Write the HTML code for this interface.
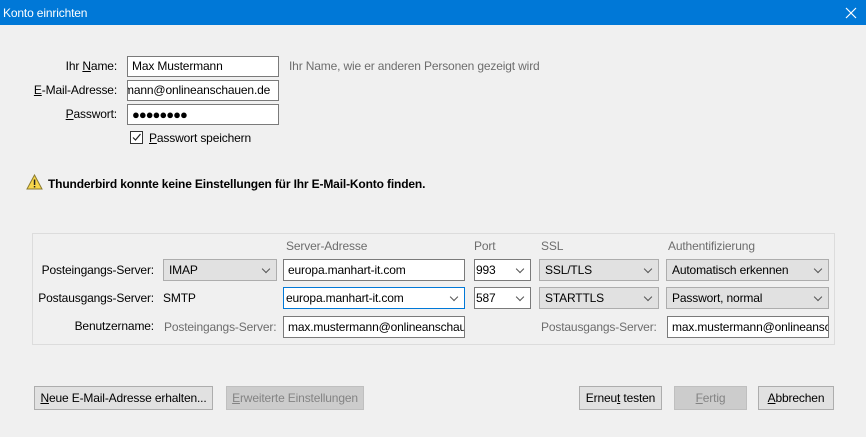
<!DOCTYPE html>
<html><head><meta charset="utf-8"><style>
*{box-sizing:border-box;margin:0;padding:0}
body{width:866px;height:437px;background:#f0f0f0;font-family:"Liberation Sans",sans-serif;font-size:12px;color:#000;position:relative;overflow:hidden;letter-spacing:-0.15px}
.a{position:absolute;white-space:nowrap;line-height:16px}
.title{position:absolute;left:0;top:0;width:866px;height:25px;background:#0078d7;color:#fff}
.in{position:absolute;background:#fff;border:1px solid #7a7a7a;height:21px;padding:2px 4px;line-height:15px;overflow:hidden;white-space:nowrap}
.sel{position:absolute;background:#e1e1e1;border:1px solid #adadad;height:22px;padding:3px 5px;line-height:15px;white-space:nowrap;overflow:hidden}
.sel.w{background:#fff;border-color:#7a7a7a}
.sel.f{background:#fff;border-color:#0078d7}
.sel:after{content:"";position:absolute;right:7px;top:6px;width:5px;height:5px;border-right:1px solid #555;border-bottom:1px solid #555;transform:rotate(45deg)}
.r{text-align:right}
.g{color:#6d6d6d}
.btn{position:absolute;height:24px;border:1px solid #adadad;background:#e1e1e1;text-align:center;line-height:22px;white-space:nowrap}
.btn.d{background:#cccccc;border-color:#bfbfbf;color:#838383}
u{text-decoration:underline}
</style></head><body>
<div class="title"><span class="a" style="left:3px;top:5px">Konto einrichten</span>
<svg style="position:absolute;left:845px;top:7px" width="12" height="12"><path d="M1 1L11 11M11 1L1 11" stroke="#fff" stroke-width="1.2"/></svg></div>

<div class="a r" style="left:20px;width:97px;top:58px">Ihr <u>N</u>ame:</div>
<div class="a r" style="left:20px;width:97px;top:82px"><u>E</u>-Mail-Adresse:</div>
<div class="a r" style="left:20px;width:97px;top:106px"><u>P</u>asswort:</div>
<div class="in" style="left:127px;top:56px;width:152px">Max Mustermann</div>
<div class="in" style="left:127px;top:80px;width:152px;text-indent:-8px">mann@onlineanschauen.de</div>
<div class="in" style="left:127px;top:104px;width:152px;font-size:13px;letter-spacing:-1px">●●●●●●●●</div>
<div class="a g" style="left:289px;top:58px">Ihr Name, wie er anderen Personen gezeigt wird</div>
<div style="position:absolute;left:130px;top:131px;width:13px;height:13px;border:1px solid #333;background:#fff"></div>
<svg style="position:absolute;left:130px;top:131px" width="13" height="13"><path d="M3 6.5L5.5 9L10.5 3" stroke="#222" fill="none" stroke-width="1.2"/></svg>
<div class="a" style="left:149px;top:130px"><u>P</u>asswort speichern</div>

<svg style="position:absolute;left:26px;top:174px" width="17" height="16"><path d="M8.5 1L16 15H1Z" fill="#f7d64a" stroke="#8a7a30"/><rect x="7.8" y="5.5" width="1.5" height="5.5" fill="#222"/><rect x="7.8" y="12" width="1.5" height="1.5" fill="#222"/></svg>
<div class="a" style="left:48px;top:176px;font-weight:bold">Thunderbird konnte keine Einstellungen für Ihr E-Mail-Konto finden.</div>

<div style="position:absolute;left:32px;top:233px;width:803px;height:112px;border:1px solid #dcdcdc"></div>
<div class="a g" style="left:286px;top:238px">Server-Adresse</div>
<div class="a g" style="left:474px;top:238px">Port</div>
<div class="a g" style="left:541px;top:238px">SSL</div>
<div class="a g" style="left:668px;top:238px">Authentifizierung</div>

<div class="a r" style="left:30px;width:124px;top:262px">Posteingangs-Server:</div>
<div class="sel" style="left:163px;top:259px;width:114px">IMAP</div>
<div class="in" style="left:283px;top:259px;width:182px;height:22px;padding-top:3px">europa.manhart-it.com</div>
<div class="sel w" style="left:474px;top:259px;width:57px;padding-left:1px">993</div>
<div class="sel" style="left:539px;top:259px;width:120px">SSL/TLS</div>
<div class="sel" style="left:666px;top:259px;width:163px">Automatisch erkennen</div>

<div class="a r" style="left:30px;width:124px;top:290px">Postausgangs-Server:</div>
<div class="a" style="left:163px;top:290px">SMTP</div>
<div class="sel f" style="left:283px;top:287px;width:182px;padding-left:2px">europa.manhart-it.com</div>
<div class="sel w" style="left:474px;top:287px;width:57px;padding-left:1px">587</div>
<div class="sel" style="left:539px;top:287px;width:120px">STARTTLS</div>
<div class="sel" style="left:666px;top:287px;width:163px">Passwort, normal</div>

<div class="a r" style="left:30px;width:124px;top:318px">Benutzername:</div>
<div class="a g" style="left:164px;top:319px">Posteingangs-Server:</div>
<div class="in" style="left:283px;top:316px;width:182px;height:22px;padding-top:3px">max.mustermann@onlineanschauen.de</div>
<div class="a g" style="left:541px;top:319px">Postausgangs-Server:</div>
<div class="in" style="left:667px;top:316px;width:162px;height:22px;padding-top:3px">max.mustermann@onlineanschauen.de</div>

<div class="btn" style="left:34px;top:386px;width:179px"><u>N</u>eue E-Mail-Adresse erhalten...</div>
<div class="btn d" style="left:226px;top:386px;width:138px"><u>E</u>rweiterte Einstellungen</div>
<div class="btn" style="left:579px;top:386px;width:83px">Erneu<u>t</u> testen</div>
<div class="btn d" style="left:674px;top:386px;width:73px"><u>F</u>ertig</div>
<div class="btn" style="left:758px;top:386px;width:76px"><u>A</u>bbrechen</div>
</body></html>
